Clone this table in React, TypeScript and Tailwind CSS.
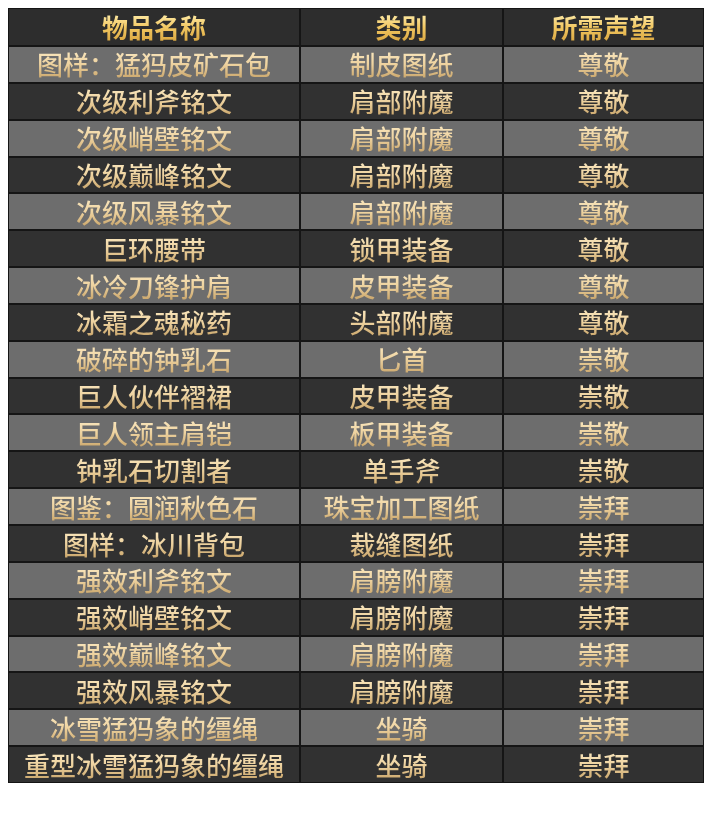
import React from "react";

const rows: [string, string, string][] = [
  ["图样：猛犸皮矿石包", "制皮图纸", "尊敬"],
  ["次级利斧铭文", "肩部附魔", "尊敬"],
  ["次级峭壁铭文", "肩部附魔", "尊敬"],
  ["次级巅峰铭文", "肩部附魔", "尊敬"],
  ["次级风暴铭文", "肩部附魔", "尊敬"],
  ["巨环腰带", "锁甲装备", "尊敬"],
  ["冰冷刀锋护肩", "皮甲装备", "尊敬"],
  ["冰霜之魂秘药", "头部附魔", "尊敬"],
  ["破碎的钟乳石", "匕首", "崇敬"],
  ["巨人伙伴褶裙", "皮甲装备", "崇敬"],
  ["巨人领主肩铠", "板甲装备", "崇敬"],
  ["钟乳石切割者", "单手斧", "崇敬"],
  ["图鉴：圆润秋色石", "珠宝加工图纸", "崇拜"],
  ["图样：冰川背包", "裁缝图纸", "崇拜"],
  ["强效利斧铭文", "肩膀附魔", "崇拜"],
  ["强效峭壁铭文", "肩膀附魔", "崇拜"],
  ["强效巅峰铭文", "肩膀附魔", "崇拜"],
  ["强效风暴铭文", "肩膀附魔", "崇拜"],
  ["冰雪猛犸象的缰绳", "坐骑", "崇拜"],
  ["重型冰雪猛犸象的缰绳", "坐骑", "崇拜"],
];

const font = { fontFamily: '"Noto Sans CJK SC", "Noto Sans", sans-serif' };

function Cell({ text, light, header }: { text: string; light?: boolean; header?: boolean }) {
  const bg = header ? "bg-[#2d2d2d]" : light ? "bg-[#6d6d6d]" : "bg-[#313131]";
  return (
    <div className={`${bg} flex items-center justify-center`}>
      <span
        className={
          header
            ? "text-[26px] leading-[1.15] font-bold bg-gradient-to-b from-[#fff0b0] via-[#f2c862] to-[#d9a640] bg-clip-text text-transparent"
            : "text-[26px] leading-[1.15] font-medium bg-gradient-to-b from-[#fbe9c2] via-[#eed3a0] to-[#c9a56a] bg-clip-text text-transparent"
        }
        style={font}
      >
        {text}
      </span>
    </div>
  );
}

export default function App() {
  return (
    <div className="w-[712px] h-[830px] bg-white pt-[8px] pl-[8px]">
      <div className="w-[696px] h-[775px] bg-[#151515] p-[1px] grid grid-cols-[290px_201px_199px] grid-rows-[36px_repeat(20,1fr)] gap-[2px]">
        <Cell text="物品名称" header />
        <Cell text="类别" header />
        <Cell text="所需声望" header />
        {rows.map((r, i) => (
          <React.Fragment key={i}>
            <Cell text={r[0]} light={i % 2 === 0} />
            <Cell text={r[1]} light={i % 2 === 0} />
            <Cell text={r[2]} light={i % 2 === 0} />
          </React.Fragment>
        ))}
      </div>
    </div>
  );
}
